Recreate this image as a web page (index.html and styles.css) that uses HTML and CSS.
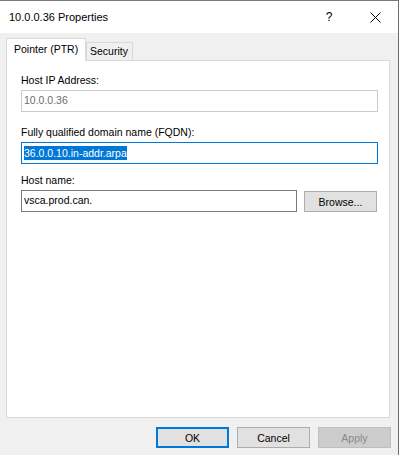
FILE: index.html
```html
<!DOCTYPE html>
<html lang="en">
<head>
    <meta charset="UTF-8">
    <meta name="viewport" content="width=device-width, initial-scale=1.0">
    <title>10.0.0.36 Properties</title>
    <link rel="stylesheet" href="styles.css">
</head>
<body>

    <div class="dialog">
        <div class="titlebar">
            <span class="title">10.0.0.36 Properties</span>
            <span class="caption-btn help">?</span>
            <span class="caption-btn close">
                <svg width="11" height="11" viewBox="0 0 11 11">
                    <path d="M0.5 0.5 L10.5 10.5 M10.5 0.5 L0.5 10.5" stroke="#000" stroke-width="1" fill="none"/>
                </svg>
            </span>
        </div>

        <div class="body">
            <div class="tabs">
                <div class="tab active">Pointer (PTR)</div>
                <div class="tab">Security</div>
            </div>

            <div class="panel">
                <div class="field">
                    <div class="label">Host IP Address:</div>
                    <div class="input disabled">10.0.0.36</div>
                </div>
                <div class="field field-fqdn">
                    <div class="label">Fully qualified domain name (FQDN):</div>
                    <div class="input focused"><span class="selected">36.0.0.10.in-addr.arpa</span></div>
                </div>
                <div class="field field-host">
                    <div class="label">Host name:</div>
                    <div class="row">
                        <div class="input host">vsca.prod.can.</div>
                        <button class="btn browse">Browse...</button>
                    </div>
                </div>
            </div>

            <div class="actions">
                <button class="btn default">OK</button>
                <button class="btn">Cancel</button>
                <button class="btn disabled">Apply</button>
            </div>
        </div>
    </div>

</body>
</html>
```

FILE: styles.css
```css
/* Reset default styles */
* {
    margin: 0;
    padding: 0;
    box-sizing: border-box;
}

body {
    font-family: "Liberation Sans", Arial, sans-serif;
    font-size: 10.5px;
    color: #000;
    background-color: #f0f0f0;
}

.dialog {
    width: 399px;
    height: 455px;
    border-top: 1px solid #7a7a7a;
    border-right: 1px solid #6e6e6e;
    background-color: #f0f0f0;
    display: flex;
    flex-direction: column;
}

/* title bar */
.titlebar {
    height: 32px;
    background-color: #fff;
    display: flex;
    align-items: center;
    padding-left: 9px;
}

.title {
    font-size: 11px;
    flex: 1;
}

.caption-btn {
    width: 46px;
    height: 32px;
    display: flex;
    align-items: center;
    justify-content: center;
}

.help {
    font-size: 12px;
}

/* dialog body */
.body {
    flex: 1;
    display: flex;
    flex-direction: column;
    padding: 5px 7px 7px 6px;
}

.tabs {
    display: flex;
    align-items: flex-end;
    height: 22px;
}

.tab {
    height: 18px;
    line-height: 17px;
    padding: 0 4px 0 3px;
    border: 1px solid #d9d9d9;
    border-bottom: none;
    background-color: #f0f0f0;
}

.tab.active {
    position: relative;
    z-index: 1;
    width: 80px;
    height: 23px;
    line-height: 20px;
    margin-bottom: -1px;
    padding-left: 7px;
    background-color: #fff;
}

.panel {
    width: 384px;
    height: 358px;
    border: 1px solid #d9d9d9;
    background-color: #fff;
    padding: 12px 11px 0 14px;
}

.field-fqdn {
    margin-top: 13px;
}

.field-host {
    margin-top: 9px;
}

.label {
    height: 14px;
    line-height: 14px;
    margin-bottom: 3px;
}

.input {
    height: 22px;
    border: 1px solid #7a7a7a;
    padding: 2px 0 0 2px;
    line-height: 14px;
    white-space: nowrap;
}

.input.disabled {
    border-color: #cccccc;
    color: #6d6d6d;
}

.input.focused {
    border-color: #0078d7;
    padding-top: 3px;
}

.selected {
    display: inline-block;
    background-color: #0078d7;
    color: #fff;
    line-height: 14px;
}

.row {
    display: flex;
    align-items: flex-start;
    gap: 7px;
}

.input.host {
    width: 276px;
}

/* buttons */
.btn {
    font-family: inherit;
    font-size: 10.5px;
    width: 73px;
    height: 21px;
    background-color: #e1e1e1;
    border: 1px solid #adadad;
    color: #000;
}

.browse {
    margin-top: 1px;
}

.actions {
    display: flex;
    justify-content: flex-end;
    gap: 8px;
    margin-top: 9px;
}

.btn.default {
    border: 2px solid #0078d7;
}

.btn.disabled {
    background-color: #cccccc;
    border-color: #bfbfbf;
    color: #8a8a8a;
}
```
